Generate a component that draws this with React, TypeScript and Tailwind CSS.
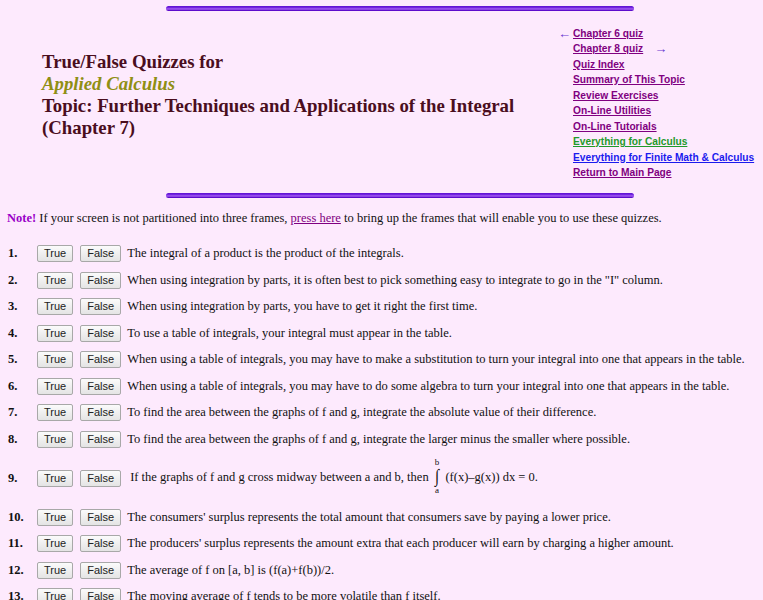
import React from 'react'

const serif = { fontFamily: '"Liberation Serif", "Times New Roman", serif' }

const links: { label: string; color: string }[] = [
  { label: 'Quiz Index', color: 'text-[#800080] decoration-[#800080]' },
  { label: 'Summary of This Topic', color: 'text-[#800080] decoration-[#800080]' },
  { label: 'Review Exercises', color: 'text-[#800080] decoration-[#800080]' },
  { label: 'On-Line Utilities', color: 'text-[#800080] decoration-[#800080]' },
  { label: 'On-Line Tutorials', color: 'text-[#800080] decoration-[#800080]' },
  { label: 'Everything for Calculus', color: 'text-[#1f9a2a] decoration-[#1f9a2a]' },
  { label: 'Everything for Finite Math & Calculus', color: 'text-[#1a1aee] decoration-[#1a1aee]' },
  { label: 'Return to Main Page', color: 'text-[#800080] decoration-[#800080]' },
]

const questions: string[] = [
  'The integral of a product is the product of the integrals.',
  'When using integration by parts, it is often best to pick something easy to integrate to go in the "I" column.',
  'When using integration by parts, you have to get it right the first time.',
  'To use a table of integrals, your integral must appear in the table.',
  'When using a table of integrals, you may have to make a substitution to turn your integral into one that appears in the table.',
  'When using a table of integrals, you may have to do some algebra to turn your integral into one that appears in the table.',
  'To find the area between the graphs of f and g, integrate the absolute value of their difference.',
  'To find the area between the graphs of f and g, integrate the larger minus the smaller where possible.',
  '',
  "The consumers' surplus represents the total amount that consumers save by paying a lower price.",
  "The producers' surplus represents the amount extra that each producer will earn by charging a higher amount.",
  'The average of f on [a, b] is (f(a)+f(b))/2.',
  'The moving average of f tends to be more volatile than f itself.',
]

function Bar() {
  return (
    <div className="ml-[166px] w-[468px] h-[5px] rounded-full bg-[linear-gradient(to_bottom,#5a0fcf_0%,#7a2ae6_40%,#b070f2_60%,#6a1ad8_80%,#5000c0_100%)]" />
  )
}

function TFButton({ label }: { label: string }) {
  return (
    <button
      type="button"
      className="h-[17px] px-[6px] border border-[#a8a8a8] rounded-[2px] bg-[linear-gradient(to_bottom,#fbfbfb,#e4e4e4)] text-[11px] leading-[15px] text-[#222]"
      style={{ fontFamily: '"Liberation Sans", Arial, sans-serif' }}
    >
      {label}
    </button>
  )
}

function Integral() {
  return (
    <>
      If the graphs of f and g cross midway between a and b, then{' '}
      <span className="inline-flex flex-col items-center align-middle mx-[3px] -mt-[4px]">
        <span className="text-[9px] leading-[11px]">b</span>
        <span className="text-[15px] leading-[17px] scale-y-125">∫</span>
        <span className="text-[9px] leading-[11px]">a</span>
      </span>{' '}
      (f(x)–g(x)) dx = 0.
    </>
  )
}

export default function App() {
  return (
    <div className="min-h-[600px] bg-[#fdeafd] pt-[6px] pb-4 text-[#111]" style={serif}>
      <Bar />

      <div className="flex items-start">
        <div className="w-[573px] shrink-0 pl-[42px] pt-[40px] text-[18.8px] leading-[22px] font-bold text-[#4a0e1e]">
          <div>True/False Quizzes for</div>
          <div className="italic text-[#8f8f14]">Applied Calculus</div>
          <div>Topic: Further Techniques and Applications of the Integral</div>
          <div>(Chapter 7)</div>
        </div>

        <div
          className="pt-[14.5px] text-[10.2px] leading-[15.5px] font-bold"
          style={{ fontFamily: '"Liberation Sans", Arial, sans-serif' }}
        >
          <div className="flex items-center">
            <span className="-ml-[15px] w-[15px] text-[#6a3ad0] font-normal text-[13px] leading-[15px]">←</span>
            <a href="#" className="underline text-[#800080]">Chapter 6 quiz</a>
          </div>
          <div className="flex items-center">
            <a href="#" className="underline text-[#800080]">Chapter 8 quiz</a>
            <span className="ml-[11px] text-[#6a3ad0] font-normal text-[13px] leading-[15px]">→</span>
          </div>
          {links.map(l => (
            <div key={l.label}>
              <a href="#" className={'underline ' + l.color}>{l.label}</a>
            </div>
          ))}
        </div>
      </div>

      <div className="mt-[12px]">
        <Bar />
      </div>

      <p className="mt-[12px] pl-[7px] text-[12.5px] leading-[16px]">
        <span className="font-bold text-[#9a00c8]">Note!</span> If your screen is not partitioned into three frames,{' '}
        <a href="#" className="underline text-[#800080]">press here</a> to bring up the frames that will enable you to use these quizzes.
      </p>

      <div className="mt-[15px] text-[12.5px]">
        {questions.map((q, i) => (
          <div
            key={i}
            className={'flex items-center pl-[8px] ' + (i === 8 ? 'h-[51.5px]' : 'h-[26.5px]')}
          >
            <span className="w-[29px] shrink-0 font-bold">{i + 1}.</span>
            <TFButton label="True" />
            <span className="w-[7px]" />
            <TFButton label="False" />
            <span className={'whitespace-nowrap ' + (i === 8 ? 'ml-[9px]' : 'ml-[6px]')}>
              {i === 8 ? <Integral /> : q}
            </span>
          </div>
        ))}
      </div>
    </div>
  )
}
